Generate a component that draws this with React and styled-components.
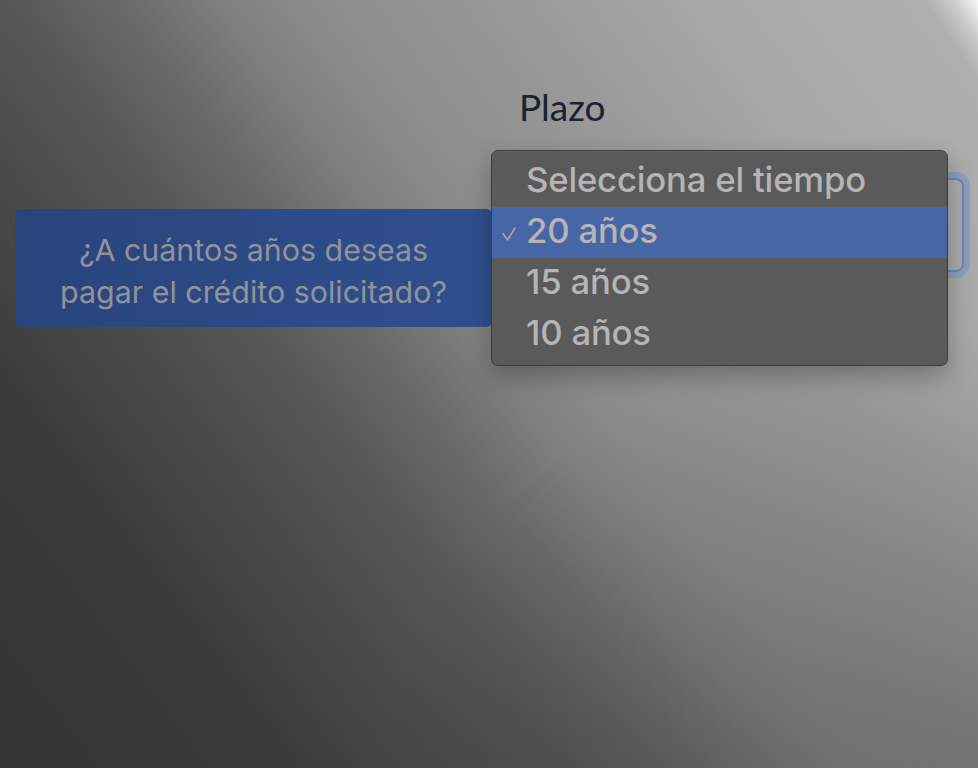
import React from "react";
import styled, { createGlobalStyle } from "styled-components";

const options = [
  { label: "Selecciona el tiempo", selected: false },
  { label: "20 años", selected: true },
  { label: "15 años", selected: false },
  { label: "10 años", selected: false },
];

const GlobalStyle = createGlobalStyle`
  html, body {
    margin: 0;
    padding: 0;
  }
  body {
    min-height: 768px;
    font-family: Inter, "Liberation Sans", sans-serif;
    background:
      linear-gradient(236deg, rgba(255, 255, 255, 0.92) 0px, rgba(255, 255, 255, 0.35) 22px, rgba(255, 255, 255, 0) 45px),
      radial-gradient(ellipse 600px 450px at 100% 100%, rgba(0, 0, 0, 0.22), rgba(0, 0, 0, 0) 100%),
      linear-gradient(53deg, #333 0%, #3b3b3b 19%, #4e4e4e 32%, #555 37%, #6a6a6a 45%, #7e7e7e 51%, #8a8a8a 56%, #939393 64%, #9b9b9b 72%, #a8a8a8 82%, #b0b0b0 100%);
    background-repeat: no-repeat;
    background-size: 978px 768px;
  }
`;

const CheckIcon = () => (
  <svg width="14" height="14" viewBox="0 0 14 14" fill="none">
    <path d="M1 6.5 L5.5 13 L13 1" stroke="#a8a8a8" strokeWidth="1.5" strokeLinecap="round" strokeLinejoin="round" />
  </svg>
);

const App = () => (
  <>
    <GlobalStyle />
    <Layout>
      <LeftColumn />
      <RightColumn>
        <Label>Plazo</Label>
        <SelectBox />
      </RightColumn>

      <Tooltip>
        ¿A cuántos años deseas
        <br />
        pagar el crédito solicitado?
      </Tooltip>

      <Menu>
        {options.map((opt) => (
          <MenuItem key={opt.label} $selected={opt.selected}>
            <CheckSlot>{opt.selected && <CheckIcon />}</CheckSlot>
            {opt.label}
          </MenuItem>
        ))}
      </Menu>
    </Layout>
  </>
);

export default App;

const Layout = styled.div`
  position: relative;
  display: grid;
  grid-template-columns: 476px 459px;
  column-gap: 15px;
  padding: 85px 0 0 14px;
  height: 768px;
  box-sizing: border-box;
`;

const LeftColumn = styled.div``;

const RightColumn = styled.div`
  display: flex;
  flex-direction: column;
`;

const Label = styled.div`
  font-family: Lato, "Open Sans", sans-serif;
  font-size: 37px;
  line-height: 44px;
  color: #1c2232;
  padding-left: 14px;
`;

const SelectBox = styled.div`
  margin-top: 49px;
  height: 90px;
  border: 2px solid #6a86bb;
  border-radius: 8px;
  box-shadow: 0 0 0 6px rgba(110, 140, 200, 0.45);
`;

const Tooltip = styled.div`
  position: absolute;
  left: 15px;
  top: 209px;
  width: 477px;
  height: 118px;
  box-sizing: border-box;
  padding-top: 20px;
  border-radius: 6px;
  background: linear-gradient(90deg, #29437c 0%, #2d4b87 60%, #2f4f8c 100%);
  color: #8e939c;
  font-size: 30.4px;
  line-height: 42px;
  text-align: center;
`;

const Menu = styled.div`
  position: absolute;
  left: 491px;
  top: 150px;
  width: 457px;
  box-sizing: border-box;
  padding: 5px 0;
  background: #5a5a5a;
  border: 1px solid #3c3c3c;
  border-radius: 7px;
  box-shadow: 0 10px 24px rgba(0, 0, 0, 0.28), inset 0 1px 0 rgba(255, 255, 255, 0.06);
`;

const MenuItem = styled.div`
  display: flex;
  align-items: center;
  height: 45px;
  padding-bottom: 6px;
  font-size: 34.7px;
  font-weight: 500;
  color: #b5b5b5;
  letter-spacing: -0.2px;
  background: ${(p) => (p.$selected ? "#4766a6" : "transparent")};
`;

const CheckSlot = styled.span`
  display: flex;
  justify-content: center;
  align-items: center;
  width: 34px;
  padding-top: 8px;
  flex-shrink: 0;
`;
